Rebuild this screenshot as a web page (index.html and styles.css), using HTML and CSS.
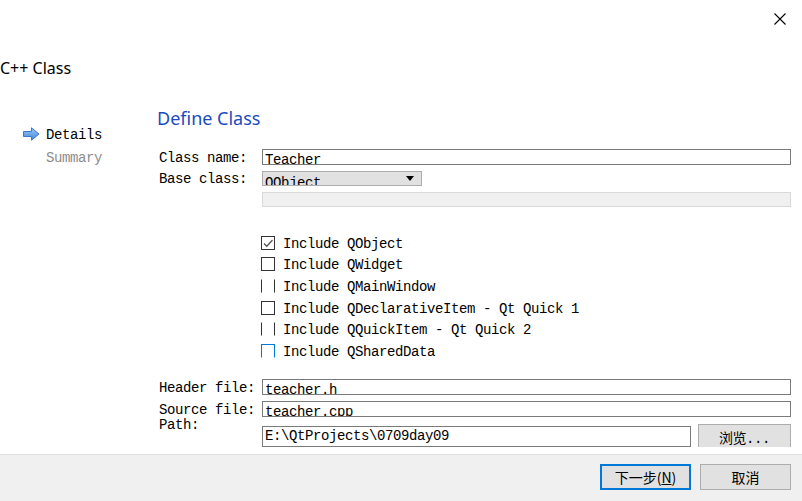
FILE: index.html
```html
<!DOCTYPE html>
<html lang="en">
<head>
  <meta charset="UTF-8">
  <meta name="viewport" content="width=device-width, initial-scale=1.0">
  <title>C++ Class Wizard</title>
  <link rel="stylesheet" href="styles.css">
</head>
<body>
  <div class="window">
    <div class="top">
      <button class="close" title="Close">
        <svg width="12" height="12" viewBox="0 0 12 12"><path d="M0.5 0.5 L11.5 11.5 M11.5 0.5 L0.5 11.5" stroke="#000" stroke-width="1.1" fill="none"/></svg>
      </button>
      <div class="wizard-title">C++ Class</div>
    </div>

    <div class="main">
      <ul class="steps">
        <li class="current">
          <svg class="arrow" width="17" height="14" viewBox="0 0 17 14">
            <defs>
              <linearGradient id="ag" x1="0" y1="0" x2="0" y2="1">
                <stop offset="0" stop-color="#9cc7f5"/>
                <stop offset="1" stop-color="#3f86de"/>
              </linearGradient>
            </defs>
            <path d="M0.5 4.5 H8.5 V0.8 L16 7 L8.5 13.2 V9.5 H0.5 Z" fill="url(#ag)" stroke="#3a78c8" stroke-width="1"/>
          </svg>
          Details
        </li>
        <li class="todo">Summary</li>
      </ul>

      <div class="page">
        <h2>Define Class</h2>

        <div class="row row-name">
          <span class="label">Class name:</span>
          <div class="field">Teacher</div>
        </div>
        <div class="row row-base">
          <span class="label">Base class:</span>
          <div class="combo">QObject<span class="caret"></span></div>
        </div>
        <div class="row row-blank">
          <span class="label"></span>
          <div class="blank"></div>
        </div>

        <div class="checks">
          <div class="check"><span class="box checked"><svg width="12" height="12" viewBox="0 0 12 12"><path d="M2 6.5 L4.8 9.2 L10.5 3" stroke="#555" stroke-width="1.3" fill="none"/></svg></span>Include QObject</div>
          <div class="check"><span class="box"></span>Include QWidget</div>
          <div class="check"><span class="box sides"></span>Include QMainWindow</div>
          <div class="check"><span class="box"></span>Include QDeclarativeItem - Qt Quick 1</div>
          <div class="check"><span class="box sides"></span>Include QQuickItem - Qt Quick 2</div>
          <div class="check"><span class="box focus"></span>Include QSharedData</div>
        </div>

        <div class="row row-file">
          <span class="label">Header file:</span>
          <div class="field">teacher.h</div>
        </div>
        <div class="row row-file">
          <span class="label">Source file:</span>
          <div class="field">teacher.cpp</div>
        </div>
        <div class="row row-path">
          <span class="label">Path:</span>
          <div class="field path">E:\QtProjects\0709day09</div>
          <button class="browse">浏览...</button>
        </div>
      </div>
    </div>

    <div class="footer">
      <button class="btn primary">下一步(<u>N</u>)</button>
      <button class="btn">取消</button>
    </div>
  </div>
</body>
</html>
```

FILE: styles.css
```css
body {
  margin: 0;
  padding: 0;
  background-color: #fff;
  color: #000;
  font-family: "Liberation Mono", "Noto Sans CJK SC", monospace;
  font-size: 14px;
  letter-spacing: -0.4px;
}
.window {
  width: 802px;
  height: 501px;
  display: flex;
  flex-direction: column;
  overflow: hidden;
}
.top {
  height: 100px;
  flex: none;
  display: flex;
  flex-direction: column;
}
.close {
  align-self: flex-end;
  margin: 13px 16px 0 0;
  padding: 0;
  width: 12px;
  height: 12px;
  border: none;
  background: none;
  display: block;
}
.close svg {
  display: block;
}
.wizard-title {
  margin-top: 33px;
  font-family: "Noto Sans", sans-serif;
  font-size: 16px;
  line-height: 20px;
  letter-spacing: 0;
}
.main {
  height: 347px;
  flex: none;
  display: flex;
  overflow: hidden;
}
.steps {
  list-style: none;
  margin: 0;
  padding: 27px 0 0 23px;
  width: 157px;
  box-sizing: border-box;
  flex: none;
}
.steps li {
  display: flex;
  align-items: center;
  line-height: 16px;
  margin-bottom: 7px;
}
.steps .arrow {
  margin-right: 6px;
  margin-top: -3px;
}
.steps .todo {
  padding-left: 23px;
  color: #8c8c8c;
}
.page {
  flex: 1;
  padding: 6px 11px 0 0;
}
.page h2 {
  margin: 0 0 19px 0;
  font-family: "Noto Sans", sans-serif;
  font-weight: normal;
  font-size: 18px;
  line-height: 24px;
  letter-spacing: 0;
  color: #1a4cbf;
}
.row {
  display: flex;
  align-items: flex-start;
}
.label {
  width: 103px;
  padding-left: 2px;
  flex: none;
  line-height: 16px;
  white-space: pre;
}
.field {
  flex: 1;
  height: 16px;
  box-sizing: border-box;
  border: 1px solid #7a7a7a;
  padding: 2px 0 0 2px;
  line-height: 16px;
  overflow: hidden;
  white-space: pre;
}
.row-name {
  height: 16px;
  margin-bottom: 6px;
}
.row-name .label {
  margin-top: 1px;
}
.row-base {
  height: 15px;
  margin-bottom: 6px;
}
.combo {
  width: 160px;
  height: 15px;
  box-sizing: border-box;
  border: 1px solid #adadad;
  background-color: #e1e1e1;
  padding: 3px 0 0 2px;
  line-height: 16px;
  overflow: hidden;
  position: relative;
}
.caret {
  position: absolute;
  right: 7px;
  top: 4px;
  width: 0;
  height: 0;
  border-left: 4px solid transparent;
  border-right: 4px solid transparent;
  border-top: 5px solid #000;
}
.blank {
  flex: 1;
  height: 15px;
  box-sizing: border-box;
  border: 1px solid #d9d9d9;
  background-color: #f0f0f0;
}
.checks {
  margin: 26px 0 20px 103px;
  height: 126px;
  overflow: hidden;
}
.check {
  height: 21.6px;
  display: flex;
  align-items: center;
  white-space: pre;
}
.box {
  width: 14px;
  height: 14px;
  box-sizing: border-box;
  margin: 0 8px 0 1px;
  border: 1px solid #333;
  background-color: #fff;
  display: flex;
  align-items: center;
  justify-content: center;
  position: relative;
  top: -1px;
}
.box.sides {
  border-top-color: #fff;
  border-bottom-color: #fff;
}
.box.focus {
  border-color: #0078d7;
  border-bottom-color: #fff;
}
.row-file {
  height: 16px;
  margin-bottom: 6px;
}
.row-file .label {
  margin-top: 1px;
}
.row-file + .row-file {
  margin-bottom: 0;
}
.row-path {
  height: 40px;
}
.field.path {
  height: 21px;
  margin-top: 9px;
  padding-top: 0;
  line-height: 19px;
  flex: none;
  width: 429px;
}
.browse {
  margin: 7px 0 0 7px;
  width: 93px;
  height: 26px;
  border: 1px solid #adadad;
  background-color: #e1e1e1;
  font-family: "Liberation Mono", "Noto Sans CJK SC", monospace;
  font-size: 14px;
  letter-spacing: -0.4px;
  padding: 0;
  color: #000;
}
.footer {
  margin-top: 7px;
  flex: 1;
  border-top: 1px solid #dfdfdf;
  background-color: #f0f0f0;
  display: flex;
  justify-content: flex-end;
  align-items: flex-start;
  gap: 9px;
  padding: 9px 11px 0 0;
}
.btn {
  width: 91px;
  height: 26px;
  border: 1px solid #adadad;
  background-color: #e1e1e1;
  font-family: "Noto Sans CJK SC", sans-serif;
  font-size: 14px;
  color: #000;
  padding: 0;
}
.btn.primary {
  border: 2px solid #0078d7;
}
```
